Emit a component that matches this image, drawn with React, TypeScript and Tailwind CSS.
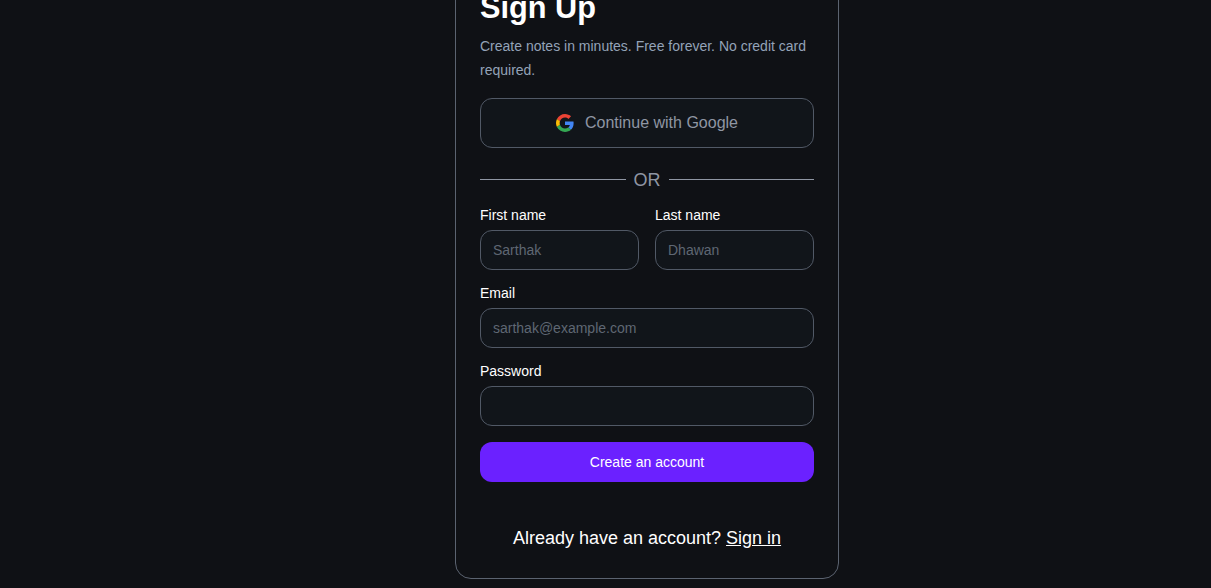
export default function App() {
  const inputClass =
    "block h-10 w-full rounded-xl border border-[#515966] bg-[#11151a] px-3 text-sm text-white outline-none placeholder:text-[#5f6773]";
  const labelClass = "block h-5 text-sm leading-5 text-white";
  return (
    <div className="flex h-[588px] w-full flex-col items-center justify-end overflow-hidden bg-[#0f1115] pb-[9px] pl-[83px] font-['Liberation_Sans',Arial,sans-serif]">
      <div className="flex w-96 shrink-0 flex-col rounded-2xl border border-[#5b6370] bg-[#0f1115] px-6 pb-[26px] pt-6">
        <h1 className="text-[30.7px] font-bold leading-9 text-white">Sign Up</h1>
        <p className="mt-2 text-sm leading-6 text-[#94a3b8]">
          Create notes in minutes. Free forever. No credit card required.
        </p>
        <button className="mt-4 flex h-[50px] w-full items-center justify-center gap-[11px] rounded-xl border border-[#515966] bg-[#11151a] text-base text-[#8f96a3]">
          <svg viewBox="0 0 48 48" className="h-[18px] w-[18px]">
            <path fill="#EA4335" d="M24 9.5c3.54 0 6.71 1.22 9.21 3.6l6.85-6.85C35.9 2.38 30.47 0 24 0 14.62 0 6.51 5.38 2.56 13.22l7.98 6.19C12.43 13.72 17.74 9.5 24 9.5z" />
            <path fill="#4285F4" d="M46.98 24.55c0-1.57-.15-3.09-.38-4.55H24v9.02h12.94c-.58 2.96-2.26 5.48-4.78 7.18l7.73 6c4.51-4.18 7.09-10.36 7.09-17.65z" />
            <path fill="#FBBC05" d="M10.53 28.59c-.48-1.45-.76-2.99-.76-4.59s.27-3.14.76-4.59l-7.98-6.19C.92 16.46 0 20.12 0 24c0 3.88.92 7.54 2.56 10.78l7.97-6.19z" />
            <path fill="#34A853" d="M24 48c6.48 0 11.93-2.13 15.89-5.81l-7.73-6c-2.15 1.45-4.92 2.3-8.16 2.3-6.26 0-11.57-4.22-13.47-9.91l-7.98 6.19C6.51 42.62 14.62 48 24 48z" />
          </svg>
          Continue with Google
        </button>
        <div className="mt-[21px] flex h-5 items-center gap-2">
          <div className="h-px flex-1 bg-[#8f96a3]" />
          <span className="pt-[2px] text-lg leading-5 text-[#8f96a3]">OR</span>
          <div className="h-px flex-1 bg-[#8f96a3]" />
        </div>
        <div className="mt-[16px] grid grid-cols-2 gap-4">
          <div>
            <label className={labelClass}>First name</label>
            <input className={`${inputClass} mt-[5px]`} placeholder="Sarthak" />
          </div>
          <div>
            <label className={labelClass}>Last name</label>
            <input className={`${inputClass} mt-[5px]`} placeholder="Dhawan" />
          </div>
        </div>
        <div className="mt-[13px]">
          <label className={labelClass}>Email</label>
          <input className={`${inputClass} mt-[5px]`} placeholder="sarthak@example.com" />
        </div>
        <div className="mt-[13px]">
          <label className={labelClass}>Password</label>
          <input className={`${inputClass} mt-[5px]`} type="password" />
        </div>
        <button className="mt-4 h-10 w-full rounded-xl bg-[#6b21ff] text-sm text-white">
          Create an account
        </button>
        <p className="mt-[42px] text-center text-lg leading-7 text-white">
          Already have an account? <a className="underline">Sign in</a>
        </p>
      </div>
    </div>
  );
}
